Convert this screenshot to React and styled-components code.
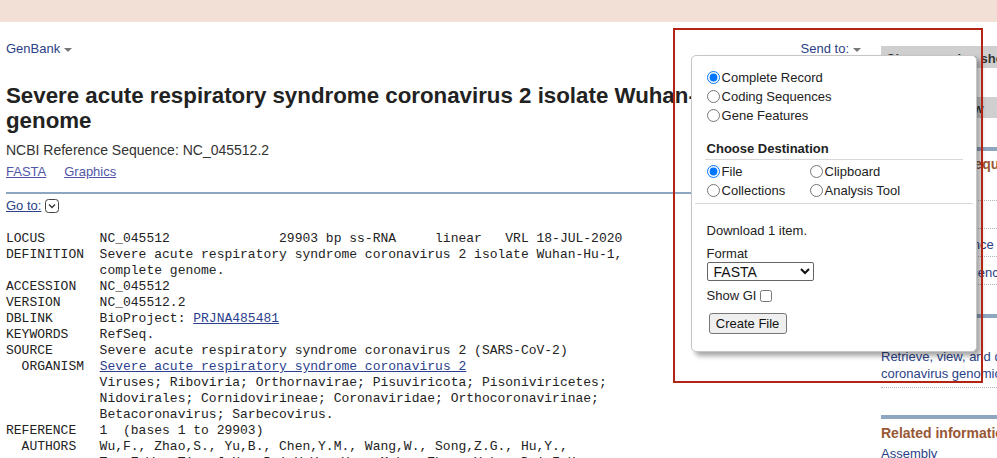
import React from 'react';
import styled, { createGlobalStyle } from 'styled-components';

const GlobalStyle = createGlobalStyle`
  html, body {
    margin: 0;
    padding: 0;
    background: #fff;
    overflow: hidden;
  }
  body {
    font-family: "Liberation Sans", Arial, sans-serif;
    color: #222;
  }
`;

const Page = styled.div`
  position: relative;
  width: 100%;
  height: 458px;
  overflow: hidden;
`;

const TopBand = styled.div`
  height: 22px;
  background: #f2dfd5;
`;

const Content = styled.div`
  display: flex;
  align-items: flex-start;
  padding-left: 6px;
  gap: 19px;
`;

const MainCol = styled.div`
  flex: none;
  width: 856px;
`;

const HeaderRow = styled.div`
  display: flex;
  justify-content: space-between;
  align-items: center;
  margin-top: 19px;
  font-size: 13px;
  line-height: 15px;
`;

const NavLink = styled.a`
  color: #2b3f87;
  text-decoration: none;
  display: inline-flex;
  align-items: center;
`;

const Caret = styled.span`
  display: inline-block;
  margin-left: 4px;
  margin-top: 2px;
  border-left: 4px solid transparent;
  border-right: 4px solid transparent;
  border-top: 4px solid #777;
`;

const SendTo = styled.div`
  position: relative;
  margin-right: 1px;
`;

const Title = styled.h1`
  margin: 27px 0 0;
  font-size: 22.3px;
  line-height: 25px;
  font-weight: bold;
  color: #222;
`;

const Subtitle = styled.div`
  margin-top: 9px;
  font-size: 14px;
  line-height: 16px;
  color: #333;
`;

const LinkRow = styled.div`
  display: flex;
  gap: 18px;
  margin-top: 6px;
  font-size: 13px;
  line-height: 15px;
`;

const FormatLink = styled.a`
  color: #5256a8;
  text-decoration: underline;
`;

const Rule = styled.div`
  margin-top: 13px;
  height: 2px;
  background: #8fa6c0;
`;

const GoTo = styled.div`
  display: flex;
  align-items: center;
  gap: 4px;
  margin-top: 4px;
  font-size: 13px;
  line-height: 15px;
  a {
    color: #2b3f87;
    text-decoration: underline;
  }
`;

const Record = styled.pre`
  margin: 18px 0 0;
  font-family: "Liberation Mono", "Courier New", monospace;
  font-size: 13px;
  line-height: 16px;
  color: #222;
`;

const RecLink = styled.a`
  color: #2c3f8e;
  text-decoration: underline;
`;

/* right column */
const SideCol = styled.div`
  flex: none;
  width: 270px;
  padding-top: 24px;
`;

const GrayBar = styled.div`
  height: ${({ h }) => h}px;
  margin-top: ${({ mt }) => mt || 0}px;
  background: #cfcfcf;
  padding: 2px 0 0 5px;
  box-sizing: border-box;
  font-size: 13px;
  font-weight: bold;
  color: #333;
  display: flex;
  align-items: center;
`;

const BlueBar = styled.div`
  height: 4px;
  margin-top: ${({ mt }) => mt}px;
  background: #8fa6c0;
`;

const SideHeading = styled.div`
  margin-top: ${({ mt }) => mt}px;
  font-size: 14px;
  line-height: 17px;
  font-weight: bold;
  color: #985735;
`;

const SideItem = styled.div`
  box-sizing: border-box;
  height: 28px;
  display: flex;
  align-items: center;
  padding-top: 4px;
  border-bottom: 1px dotted #b5b5b5;
  font-size: 13px;
  color: #2b3f87;
`;

const SideText = styled.div`
  margin-top: 7px;
  padding-bottom: 5px;
  border-bottom: 1px dotted #b5b5b5;
  font-size: 13px;
  line-height: 17px;
  color: #2b3f87;
`;

const SideLink = styled.div`
  margin-top: 3px;
  font-size: 13px;
  line-height: 17px;
  color: #2b3f87;
`;

/* send to popup */
const Popup = styled.div`
  position: absolute;
  top: 14px;
  left: -110px;
  width: 286px;
  box-sizing: border-box;
  padding: 0 3px 17px;
  background: #fff;
  border: 1px solid #c6c6c6;
  border-radius: 5px;
  box-shadow: 4px 4px 5px rgba(0, 0, 0, 0.35);
  font-size: 13px;
  color: #222;
  z-index: 2;
`;

const RecordGroup = styled.div`
  padding: 12px 12px 0;
`;

const Option = styled.label`
  display: flex;
  align-items: center;
  height: 19px;
  white-space: nowrap;
  input {
    margin: 0 2px 0 0;
    width: 13px;
    height: 13px;
  }
`;

const DestSection = styled.div`
  margin-top: 16px;
  padding: 0 10px 3px;
  border-bottom: 1px solid #d8d8d8;
`;

const DestHeading = styled.div`
  padding: 0 0 2px 2px;
  font-weight: bold;
  line-height: 16px;
  border-bottom: 1px solid #d8d8d8;
`;

const DestGrid = styled.div`
  display: grid;
  grid-template-columns: 103px auto;
  padding: 2px 0 0 2px;
`;

const FileSection = styled.div`
  padding: 19px 12px 0;
  line-height: 16px;
`;

const FieldLabel = styled.div`
  margin-top: ${({ mt }) => mt || 0}px;
`;

const FormatSelect = styled.select`
  display: block;
  width: 107px;
  height: 19px;
  margin-top: 0;
  padding: 0 0 0 2px;
  font-family: "Liberation Sans", Arial, sans-serif;
  font-size: 14px;
  color: #111;
  border: 1px solid #666;
  border-radius: 2px;
  background: #fff;
`;

const ShowGI = styled.label`
  display: flex;
  align-items: center;
  margin-top: 7px;
  height: 16px;
  input {
    margin: 0 0 0 4px;
    width: 12px;
    height: 12px;
  }
`;

const CreateButton = styled.button`
  margin: 9px 0 0 2px;
  width: 78px;
  height: 21px;
  padding: 0;
  font-family: "Liberation Sans", Arial, sans-serif;
  font-size: 13px;
  color: #111;
  background: #efefef;
  border: 1px solid #767676;
  border-radius: 3px;
`;

const Annotation = styled.div`
  position: absolute;
  left: 673px;
  top: 28px;
  width: 310px;
  height: 355px;
  box-sizing: border-box;
  border: 2px solid #b32512;
  pointer-events: none;
  z-index: 3;
`;

const GoToIcon = () => (
  <svg width="14" height="14" viewBox="0 0 14 14">
    <rect x="0.5" y="0.5" width="13" height="13" rx="3" fill="#fff" stroke="#444" />
    <polyline points="4,5.5 7,8.5 10,5.5" fill="none" stroke="#333" strokeWidth="1.3" />
  </svg>
);

const RECORD = [
  'LOCUS       NC_045512              29903 bp ss-RNA     linear   VRL 18-JUL-2020',
  'DEFINITION  Severe acute respiratory syndrome coronavirus 2 isolate Wuhan-Hu-1,',
  '            complete genome.',
  'ACCESSION   NC_045512',
  'VERSION     NC_045512.2',
];

const TAXONOMY = [
  '            Viruses; Riboviria; Orthornavirae; Pisuviricota; Pisoniviricetes;',
  '            Nidovirales; Cornidovirineae; Coronaviridae; Orthocoronavirinae;',
  '            Betacoronavirus; Sarbecovirus.',
  'REFERENCE   1  (bases 1 to 29903)',
  '  AUTHORS   Wu,F., Zhao,S., Yu,B., Chen,Y.M., Wang,W., Song,Z.G., Hu,Y.,',
  '            Tao,Z.W., Tian,J.H., Pei,Y.Y., Yuan,M.L., Zhang,Y.L., Dai,F.H.,',
];

const App = () => (
  <Page>
    <GlobalStyle />
    <TopBand />
    <Content>
      <MainCol>
        <HeaderRow>
          <NavLink href="#">GenBank<Caret /></NavLink>
          <SendTo>
            <NavLink href="#">Send to:<Caret /></NavLink>
            <Popup>
              <RecordGroup>
                <Option><input type="radio" name="rec" defaultChecked />Complete Record</Option>
                <Option><input type="radio" name="rec" />Coding Sequences</Option>
                <Option><input type="radio" name="rec" />Gene Features</Option>
              </RecordGroup>
              <DestSection>
                <DestHeading>Choose Destination</DestHeading>
                <DestGrid>
                  <Option><input type="radio" name="dest" defaultChecked />File</Option>
                  <Option><input type="radio" name="dest" />Clipboard</Option>
                  <Option><input type="radio" name="dest" />Collections</Option>
                  <Option><input type="radio" name="dest" />Analysis Tool</Option>
                </DestGrid>
              </DestSection>
              <FileSection>
                <FieldLabel>Download 1 item.</FieldLabel>
                <FieldLabel mt={7}>Format</FieldLabel>
                <FormatSelect defaultValue="fasta">
                  <option value="fasta">FASTA</option>
                  <option value="gb">GenBank</option>
                </FormatSelect>
                <ShowGI>Show GI<input type="checkbox" /></ShowGI>
                <CreateButton>Create File</CreateButton>
              </FileSection>
            </Popup>
          </SendTo>
        </HeaderRow>

        <Title>Severe acute respiratory syndrome coronavirus 2 isolate Wuhan-Hu-1, complete genome</Title>
        <Subtitle>NCBI Reference Sequence: NC_045512.2</Subtitle>
        <LinkRow>
          <FormatLink href="#">FASTA</FormatLink>
          <FormatLink href="#">Graphics</FormatLink>
        </LinkRow>
        <Rule />
        <GoTo>
          <a href="#">Go to:</a>
          <GoToIcon />
        </GoTo>

        <Record>
          {RECORD.join('\n')}
          {'\nDBLINK      BioProject: '}<RecLink href="#">PRJNA485481</RecLink>
          {'\nKEYWORDS    RefSeq.'}
          {'\nSOURCE      Severe acute respiratory syndrome coronavirus 2 (SARS-CoV-2)'}
          {'\n  ORGANISM  '}<RecLink href="#">Severe acute respiratory syndrome coronavirus 2</RecLink>
          {'\n' + TAXONOMY.join('\n')}
        </Record>
      </MainCol>

      <SideCol>
        <GrayBar h={22}>Change region shown</GrayBar>
        <GrayBar h={21} mt={29}>Customize view</GrayBar>
        <BlueBar mt={29} />
        <SideHeading mt={5}>Analyze this sequence</SideHeading>
        <SideItem>Run BLAST</SideItem>
        <SideItem>Pick Primers</SideItem>
        <SideItem>Highlight Sequence Features</SideItem>
        <SideItem>Find in this Sequence</SideItem>
        <BlueBar mt={29} />
        <SideHeading mt={6}>NCBI Virus</SideHeading>
        <SideText>Retrieve, view, and download SARS-CoV-2 coronavirus genomic sequences</SideText>
        <BlueBar mt={27} />
        <SideHeading mt={6}>Related information</SideHeading>
        <SideLink>Assembly</SideLink>
      </SideCol>
    </Content>
    <Annotation />
  </Page>
);

export default App;
